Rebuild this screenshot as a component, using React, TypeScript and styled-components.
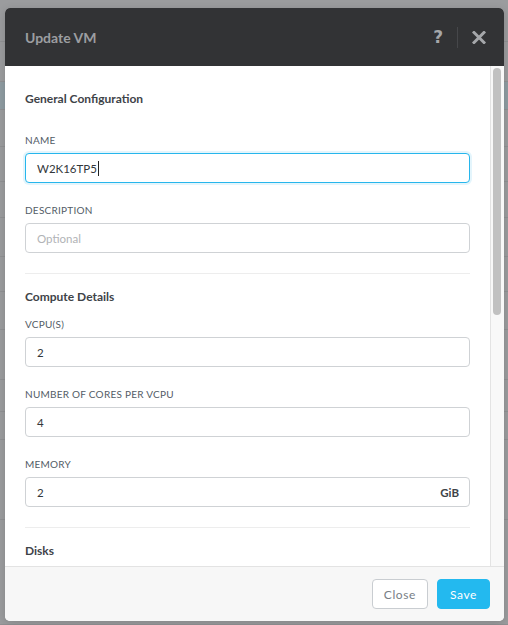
import React from 'react';
import styled, { createGlobalStyle } from 'styled-components';

const GlobalStyle = createGlobalStyle`
  html, body {
    margin: 0;
    padding: 0;
  }
  body {
    font-family: Lato, "Open Sans", "Liberation Sans", sans-serif;
    background: #9b9c9e;
  }
  * {
    box-sizing: border-box;
  }
`;

const Backdrop = styled.div`
  position: relative;
  width: 508px;
  height: 625px;
  overflow: hidden;
  background: #9b9c9e;
`;

const BgRow = styled.div<{ $h: number; $tint?: boolean }>`
  height: ${({ $h }) => $h}px;
  border-bottom: 1px solid #909193;
  background: ${({ $tint }) => ($tint ? '#8f9ca2' : 'transparent')};
`;

const Modal = styled.div`
  position: absolute;
  top: 8px;
  left: 5px;
  width: 499px;
  height: 613px;
  display: flex;
  flex-direction: column;
  background: #fff;
  border-radius: 5px;
  overflow: hidden;
  box-shadow: 0 2px 8px rgba(0, 0, 0, 0.15);
`;

const Header = styled.header`
  flex: 0 0 58px;
  display: flex;
  align-items: center;
  padding: 0 18px 0 20px;
  background: #323335;
`;

const Title = styled.h1`
  flex: 1;
  margin: 0;
  font-size: 14px;
  font-weight: 700;
  color: #9c9ea1;
`;

const HeaderActions = styled.div`
  display: flex;
  align-items: center;
  gap: 14px;
`;

const HelpIcon = styled.span`
  font-family: "DejaVu Sans", sans-serif;
  font-size: 17px;
  font-weight: 700;
  line-height: 1;
  color: #a5a7aa;
`;

const VDivider = styled.span`
  width: 1px;
  height: 21px;
  background: #46474a;
`;

const BodyRow = styled.div`
  flex: 1;
  display: flex;
  min-height: 0;
`;

const Body = styled.div`
  flex: 1;
  overflow: hidden;
  padding: 25px 20px 0;
`;

const ScrollTrack = styled.div`
  flex: 0 0 14px;
  padding: 2px 3px 0 2px;
  background: #f8f8f8;
  border-left: 1px solid #e3e3e3;
`;

const ScrollThumb = styled.div`
  height: 247px;
  border-radius: 4px;
  background: #c1c1c1;
`;

const SectionTitle = styled.h2<{ $spacious?: boolean }>`
  margin: 0 0 ${({ $spacious }) => ($spacious ? 26 : 12)}px;
  font-size: 12px;
  line-height: 16px;
  font-weight: 700;
  color: #3e4348;
`;

const Divider = styled.hr`
  margin: 0 0 15px;
  border: none;
  border-top: 1px solid #ededed;
`;

const Field = styled.div`
  margin-bottom: 20px;
`;

const Label = styled.label`
  display: block;
  margin-bottom: 6px;
  font-size: 10px;
  line-height: 14px;
  font-weight: 400;
  letter-spacing: 0.25px;
  color: #535c66;
  text-transform: uppercase;
`;

const InputBox = styled.div<{ $focused?: boolean }>`
  display: flex;
  align-items: center;
  height: 30px;
  padding: 0 10px 0 11px;
  border: 1px solid ${({ $focused }) => ($focused ? '#27b6ec' : '#cfd2d5')};
  border-radius: 4px;
  background: #fff;
  font-size: 11.5px;
  color: #33373b;
  box-shadow: ${({ $focused }) => ($focused ? '0 0 0 2px #e4f5fc' : 'none')};
`;

const Value = styled.span`
  flex: 1;
  white-space: nowrap;
`;

const Placeholder = styled.span`
  flex: 1;
  color: #b1b3b6;
`;

const Caret = styled.span`
  display: inline-block;
  width: 1px;
  height: 15px;
  margin-left: 1px;
  vertical-align: -3px;
  background: #222;
`;

const Suffix = styled.span`
  font-weight: 700;
  color: #3e4348;
`;

const Footer = styled.footer`
  flex: 0 0 55px;
  display: flex;
  justify-content: flex-end;
  align-items: center;
  gap: 9px;
  padding: 0 14px;
  background: #f7f7f7;
  border-top: 1px solid #e3e3e3;
`;

const Button = styled.button<{ $primary?: boolean }>`
  height: 30px;
  padding: 0 ${({ $primary }) => ($primary ? 12 : 11)}px;
  border: 1px solid ${({ $primary }) => ($primary ? '#23b9ef' : '#c9cdd1')};
  border-radius: 4px;
  background: ${({ $primary }) => ($primary ? '#23b9ef' : '#fff')};
  color: ${({ $primary }) => ($primary ? '#fff' : '#787e85')};
  font-family: inherit;
  font-size: 12px;
  letter-spacing: 0.6px;
  cursor: pointer;
`;

const bgRows = [
  { h: 42 }, { h: 40 }, { h: 28, tint: true }, { h: 37 }, { h: 35 }, { h: 36 },
  { h: 39 }, { h: 35 }, { h: 38 }, { h: 50 }, { h: 32 }, { h: 28 }, { h: 80 }, { h: 105 },
];

const CloseIcon = () => (
  <svg width="14" height="13" viewBox="0 0 14 13">
    <path d="M2 1.5 L12 11.5 M12 1.5 L2 11.5" stroke="#a5a7aa" strokeWidth="3" strokeLinecap="square" />
  </svg>
);

const App = () => {
  return (
    <>
      <GlobalStyle />
      <Backdrop>
        {bgRows.map((r, i) => (
          <BgRow key={i} $h={r.h} $tint={r.tint} />
        ))}
        <Modal>
          <Header>
            <Title>Update VM</Title>
            <HeaderActions>
              <HelpIcon>?</HelpIcon>
              <VDivider />
              <CloseIcon />
            </HeaderActions>
          </Header>
          <BodyRow>
            <Body>
              <SectionTitle $spacious>General Configuration</SectionTitle>
              <Field>
                <Label>Name</Label>
                <InputBox $focused>
                  <Value>
                    W2K16TP5
                    <Caret />
                  </Value>
                </InputBox>
              </Field>
              <Field>
                <Label>Description</Label>
                <InputBox>
                  <Placeholder>Optional</Placeholder>
                </InputBox>
              </Field>
              <Divider />

              <SectionTitle>Compute Details</SectionTitle>
              <Field>
                <Label>vCPU(s)</Label>
                <InputBox>
                  <Value>2</Value>
                </InputBox>
              </Field>
              <Field>
                <Label>Number of Cores per vCPU</Label>
                <InputBox>
                  <Value>4</Value>
                </InputBox>
              </Field>
              <Field>
                <Label>Memory</Label>
                <InputBox>
                  <Value>2</Value>
                  <Suffix>GiB</Suffix>
                </InputBox>
              </Field>
              <Divider />

              <SectionTitle>Disks</SectionTitle>
            </Body>
            <ScrollTrack>
              <ScrollThumb />
            </ScrollTrack>
          </BodyRow>
          <Footer>
            <Button>Close</Button>
            <Button $primary>Save</Button>
          </Footer>
        </Modal>
      </Backdrop>
    </>
  );
};

export default App;
